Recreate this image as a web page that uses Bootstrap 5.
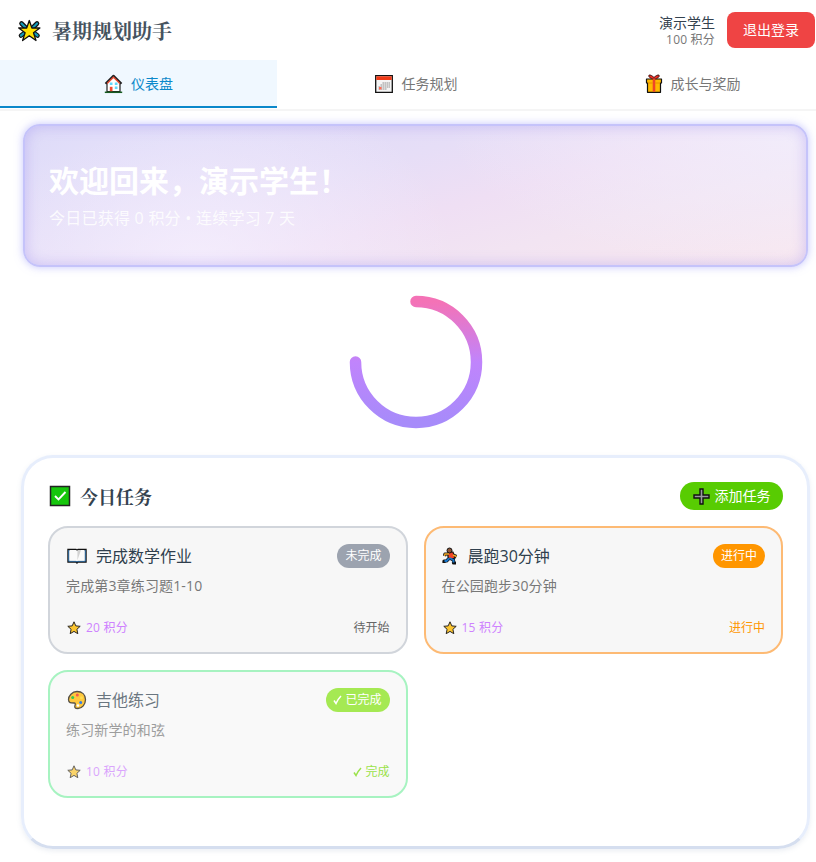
<!DOCTYPE html>
<html lang="zh-CN">
<head>
<meta charset="utf-8">
<meta name="viewport" content="width=device-width, initial-scale=1">
<title>暑期规划助手</title>
<link href="https://cdn.jsdelivr.net/npm/bootstrap@5.3.0/dist/css/bootstrap.min.css" rel="stylesheet">
<style>
html{overflow:hidden}
body{font-family:"Open Sans","Noto Sans CJK SC",sans-serif;color:#2c3e50;background:#fff;font-size:14px;line-height:20px;overflow:hidden}
.planner{width:831px;height:862px}
.topbar{height:60px}
.brand-title{font-family:"Noto Serif CJK SC","Noto Sans CJK SC",sans-serif;font-size:20px;font-weight:700;line-height:28px;color:#46535f;margin-left:10px;padding-top:1px}
.user-name{color:#34424f;line-height:19px}
.user-points{font-size:12px;line-height:16px;color:#777;letter-spacing:.2px}
.btn-exit{background:#ef4444;color:#fff;width:88px;height:36px;border-radius:8px;font-size:14px;line-height:20px}
.tabs{height:51px;border-bottom:2px solid #f5f5f5}
.tab-item{height:48px;color:#777;border-bottom:2px solid transparent;border-radius:0;gap:8px;padding-top:2px}
.tab-item.active{background:#f0f8ff;color:#0b88ca;border-bottom-color:#0b88ca}
.hero{margin:13px 23px 0;height:143px;border:2px solid #c5c3fa;border-radius:17px;padding:36px 24px 0;color:#fff;
 background:radial-gradient(ellipse 260px 190px at 22% 100%,rgba(246,240,254,.8),rgba(246,240,254,0)),radial-gradient(ellipse 360px 150px at 100% 0,rgba(242,238,252,.9),rgba(242,238,252,0)),linear-gradient(164deg,#dddaf8 10%,#e6def7 38%,#efdff4 56%,#f2e4f2 72%,#f9e8ef);
 box-shadow:0 0 8px rgba(150,150,250,.55),inset 0 0 14px rgba(160,145,240,.45)}
.hero-title{font-size:30px;line-height:38px;font-weight:700}
.hero-note{font-size:16px;line-height:24px;opacity:.85;margin-top:6px;letter-spacing:.24px}
.ring-box{height:188px;padding-top:21px}
.board{margin:0 21px 0 21px;height:394px;border:3px solid #e7eefc;border-bottom-color:#d5deef;border-radius:32px;padding:22px 24px 0;box-shadow:0 2px 5px rgba(100,120,160,.13)}
.board-head{height:32px;margin-bottom:14px}
.board-title{font-family:"Noto Serif CJK SC","Noto Sans CJK SC",sans-serif;font-size:18px;line-height:28px;font-weight:700;color:#34424f;margin-left:9px}
.btn-plus{width:103px;height:28px;border-radius:14px;background:#58cc02;color:#fff;font-size:14px;line-height:20px;gap:5px}
.task-grid{display:grid;grid-template-columns:1fr 1fr;gap:16px}
.task{height:128px;border:2px solid #d1d5db;border-radius:20px;background:#f7f7f7;padding:16px 16px 0}
.task.doing{border-color:#fdba74}
.task.finished{border-color:#a7f3c1;background:#f9f9f9}
.task.finished .dim{opacity:.7}
.task-name{font-size:16px;line-height:24px;color:#2f3f4d}
.task-note{line-height:20px;color:#777;margin-top:8px;letter-spacing:.15px}
.task-foot{font-size:12px;line-height:16px;margin-top:24px}
.pts{color:#ce82ff;gap:4px;font-size:12px;letter-spacing:.2px}
.state{height:24px;border-radius:12px;font-size:12px;line-height:24px;padding:0 8px;color:#fff;background:#9ca3af}
.doing .state{background:#ff9600}
.finished .state{background:#a5e953;padding:0 8px 0 7px;gap:3px}
.gray-text{color:#666}.orange-text{color:#ff9600}.lime-text{color:#9be24a;gap:3px}
svg{display:block;flex:none}
</style>
<script src="https://cdn.jsdelivr.net/npm/bootstrap@5.3.0/dist/js/bootstrap.bundle.min.js"></script>
</head>
<body>
<svg width="0" height="0" class="d-none">
 <symbol id="star" viewBox="0 0 14 14"><path d="M7 .8l1.800 4.100 4.400.4-3.300 3 .9 4.400L7 10.400l-3.800 2.300.9-4.400-3.300-3 4.400-.4z" fill="#fcc52f" stroke="#282522" stroke-linejoin="round"/></symbol>
</svg>
<div class="planner">
 <header class="topbar d-flex align-items-center justify-content-between px-3">
  <div class="d-flex align-items-center">
   <svg width="26" height="26" viewBox="0 0 26 26"><path d="M5.500 6.500l4 4M21 6.500l-4 4M5 18.500l4-3M21.500 18.500l-4-3" stroke="#111" stroke-width="4.600" stroke-linecap="round"/><path d="M5.500 6.500l4 4M21 6.500l-4 4M5 18.500l4-3M21.500 18.500l-4-3" stroke="#159bb8" stroke-width="2.200" stroke-linecap="round"/><path d="M13.300 3.500l2.600 7.500h8l-6.400 4.700 2.500 7.800-6.700-4.800-6.700 4.800 2.500-7.800L2.700 11h8z" fill="#ffe100" stroke="#111" stroke-width="1.300" stroke-linejoin="round"/></svg>
   <span class="brand-title">暑期规划助手</span>
  </div>
  <div class="d-flex align-items-center">
   <div class="text-end me-2 pe-1"><div class="user-name">演示学生</div><div class="user-points">100 积分</div></div>
   <button class="btn btn-exit border-0 p-0">退出登录</button>
  </div>
 </header>
 <nav class="tabs row g-0">
  <a class="tab-item active col d-flex align-items-center justify-content-center text-decoration-none" href="#"><svg width="19" height="20" viewBox="0 0 19 20"><path d="M3 8.500v9h13v-9l-6.500-6z" fill="#fff" stroke="#222" stroke-width="1.200"/><path d="M1.500 9.800l8-8 8 8" fill="none" stroke="#222" stroke-width="2.200" stroke-linejoin="round"/><path d="M3.200 9.500l6.300-6.300 6.300 6.300" fill="none" stroke="#ee5239" stroke-width="1.300"/><path d="M5.800 8.500h2.700V11H5.800zm5 0h2.700V11h-2.700zm0 4h2.700V15h-2.700z" fill="#61d7fb"/><path d="M5.800 12.800h2.700v4.600H5.800z" fill="#ef4a32"/><path d="M.8 18.300h17.400" stroke="#175c21" stroke-width="1.500"/></svg><span>仪表盘</span></a>
  <a class="tab-item col d-flex align-items-center justify-content-center text-decoration-none" href="#"><svg width="20" height="18" viewBox="0 0 20 18"><path d="M1.700 .7h16.600v16.600H1.700z" fill="#f5f5f5" stroke="#111" stroke-width="1.300"/><path d="M2.300 1.300h15.400V5H2.300z" fill="#f03a17"/><path d="M8.500 8H16M6.500 10H16M4.500 12H16M4.500 14H13" stroke="#aaa" stroke-width="1.300" stroke-dasharray="1.400 .6"/><path d="M5 12h2.500v2.500H5z" fill="#ff6b55"/></svg><span>任务规划</span></a>
  <a class="tab-item col d-flex align-items-center justify-content-center text-decoration-none" href="#"><svg width="18" height="20" viewBox="0 0 18 20"><path d="M1.500 5h15v4h-1v9.300h-13V9h-1z" fill="#ffb900" stroke="#111" stroke-width="1.200" stroke-linejoin="round"/><path d="M9 5C5 5 3 2 4 1.200S7.500 2 9 3.500C10.500 2 13 .4 14 1.200S13 5 9 5z" fill="#ef2b20" stroke="#3d1717"/><path d="M7.700 4.500h2.600v13.200H7.700z" fill="#ef4428"/><path d="M3 9h4.700M10.300 9H15" stroke="#e88c00"/></svg><span>成长与奖励</span></a>
 </nav>
 <section class="hero">
  <div class="hero-title">欢迎回来，演示学生！</div>
  <div class="hero-note">今日已获得 0 积分 • 连续学习 7 天</div>
 </section>
 <div class="ring-box d-flex justify-content-center align-items-start">
  <svg width="148" height="148" viewBox="0 0 148 148"><defs><linearGradient id="arc" gradientUnits="userSpaceOnUse" x1="0" y1="14" x2="0" y2="134"><stop stop-color="#f472b6"/><stop offset=".5" stop-color="#c084fc"/><stop offset="1" stop-color="#a78bfa"/></linearGradient></defs><path d="M74 13.500a60.500 60.500 0 1 1-60.500 60.500" fill="none" stroke="url(#arc)" stroke-width="11.500" stroke-linecap="round"/></svg>
 </div>
 <section class="board">
  <div class="board-head d-flex align-items-center justify-content-between">
   <div class="d-flex align-items-center"><svg width="23" height="22" viewBox="0 0 23 22"><path d="M2.500 1.500h19v19h-19z" fill="#16c60c" stroke="#222" stroke-width="1.500"/><path d="M7 11l3.500 3.500 7-7.500" fill="none" stroke="#fff" stroke-width="1.900"/></svg><span class="board-title">今日任务</span></div>
   <button class="btn btn-plus border-0 p-0 d-flex align-items-center justify-content-center"><svg width="17" height="17" viewBox="0 0 17 17"><path d="M7 1h3v6h6v3h-6v6H7v-6H1V7h6z" fill="#999ca0" stroke="#111" stroke-width="1.400"/></svg><span>添加任务</span></button>
  </div>
  <div class="task-grid">
   <article class="task">
    <div class="d-flex justify-content-between align-items-center"><div class="d-flex align-items-center"><svg width="22" height="18" viewBox="0 0 22 18"><path d="M2 2.500h8l1 .7 1-.7h8V15h-8l-1 1-1-1H2z" fill="#f5f5f5" stroke="#111" stroke-width="1.400"/><path d="M2.700 3v11.300H10l1 .8 1-.8h7.300V3" stroke="#26649c" fill="none"/><path d="M4 3h6l1 1v10l-1-.5H4zM12 3h6v10.500h-6z" fill="#fafafa"/><path d="M11.500 3h3.500l-3.500 10z" fill="#d2d2d2"/></svg><span class="task-name ms-2">完成数学作业</span></div><span class="state">未完成</span></div>
    <div class="task-note">完成第3章练习题1-10</div>
    <div class="task-foot d-flex justify-content-between"><span class="pts d-flex align-items-center"><svg width="16" height="14"><use href="#star" x="1" width="14" height="14"/></svg>20 积分</span><span class="gray-text">待开始</span></div>
   </article>
   <article class="task doing">
    <div class="d-flex justify-content-between align-items-center"><div class="d-flex align-items-center"><svg width="18" height="18" viewBox="0 0 18 18"><path d="M6 7L3 7 2.500 9M11 8l3.500 1.500M8 11l3.500 2v3H14M6.500 12l-2 2H2v2" fill="none" stroke="#111" stroke-width="3.200" stroke-linejoin="round"/><path d="M6 5h5l2 6-5 1.500-2-2z" fill="#f04428" stroke="#111" stroke-width="1.200"/><circle cx="7.500" cy="3.500" r="2.500" fill="#8b5638" stroke="#111"/><path d="M7 7L3 7 2.500 9M11 8l3.500 1.500" fill="none" stroke="#f5aa24" stroke-width="1.400"/><path d="M7.500 11l4 2v2.500M7 11.500L4.500 14H2.500" fill="none" stroke="#1475cc" stroke-width="1.900"/></svg><span class="task-name ms-2">晨跑30分钟</span></div><span class="state">进行中</span></div>
    <div class="task-note">在公园跑步30分钟</div>
    <div class="task-foot d-flex justify-content-between"><span class="pts d-flex align-items-center"><svg width="16" height="14"><use href="#star" x="1" width="14" height="14"/></svg>15 积分</span><span class="orange-text">进行中</span></div>
   </article>
   <article class="task finished">
    <div class="d-flex justify-content-between align-items-center"><div class="d-flex align-items-center"><svg width="22" height="20" viewBox="0 0 22 20"><path d="M11 1.500c5 0 8.500 3 8.500 8S16 18.500 12 18.500c-3.500 0-3.500-1.500-3-3s.5-2.500-1-2.500c-3 0-5.500 0-5.500-3.500s3.500-8 8.500-8z" fill="#ffc83d" stroke="#555047" stroke-width="1.300"/><circle cx="11.300" cy="5" r="1.500" fill="#f45b4f"/><circle cx="6.700" cy="7.500" r="1.500" fill="#35c951"/><circle cx="14.700" cy="12.500" r="1.500" fill="#367de5"/><circle cx="15.500" cy="7.800" r="1.500" fill="#ffdd51"/><circle cx="12" cy="15.500" r="1.300" fill="#fff"/></svg><span class="task-name ms-2 dim">吉他练习</span></div><span class="state d-flex align-items-center"><svg width="9" height="10" viewBox="0 0 9 10"><path d="M1 5.500l2 3Q5 4 8 1" fill="none" stroke="#fff" stroke-width="1.500"/></svg>已完成</span></div>
    <div class="task-note dim">练习新学的和弦</div>
    <div class="task-foot d-flex justify-content-between"><span class="pts dim d-flex align-items-center"><svg width="16" height="14"><use href="#star" x="1" width="14" height="14"/></svg>10 积分</span><span class="lime-text d-flex align-items-center"><svg width="9" height="10" viewBox="0 0 9 10"><path d="M1 5.500l2 3Q5 4 8 1" fill="none" stroke="#9be24a" stroke-width="1.500"/></svg>完成</span></div>
   </article>
  </div>
 </section>
</div>
</body>
</html>
